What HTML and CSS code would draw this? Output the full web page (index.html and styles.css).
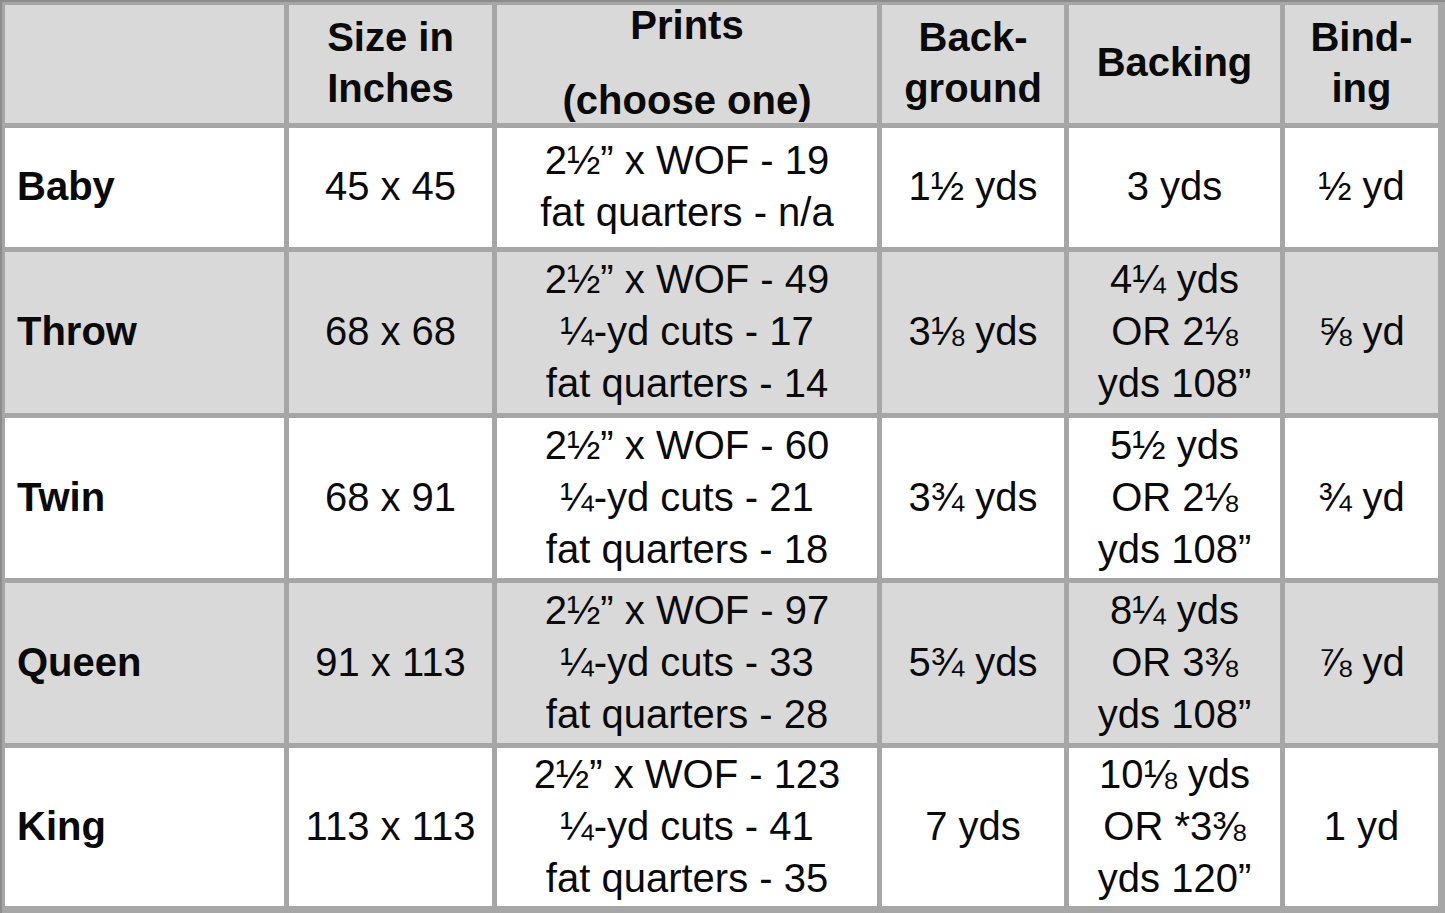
FILE: index.html
```html
<!DOCTYPE html>
<html lang="en">
<head>
<meta charset="utf-8">
<title>Quilt Fabric Requirements</title>
<link rel="stylesheet" href="styles.css">
</head>
<body>
<div class="chart">
  <div class="cell head"></div>
  <div class="cell head c"><span>Size in</span><span>Inches</span></div>
  <div class="cell head c prints"><span>Prints</span><span>(choose one)</span></div>
  <div class="cell head c"><span>Back-</span><span>ground</span></div>
  <div class="cell head c"><span>Backing</span></div>
  <div class="cell head c"><span>Bind-</span><span>ing</span></div>

  <div class="cell name"><span>Baby</span></div>
  <div class="cell c"><span>45 x 45</span></div>
  <div class="cell c"><span>2½” x WOF - 19</span><span>fat quarters - n/a</span></div>
  <div class="cell c"><span>1½ yds</span></div>
  <div class="cell c"><span>3 yds</span></div>
  <div class="cell c"><span>½ yd</span></div>

  <div class="cell shade name"><span>Throw</span></div>
  <div class="cell shade c"><span>68 x 68</span></div>
  <div class="cell shade c"><span>2½” x WOF - 49</span><span>¼-yd cuts - 17</span><span>fat quarters - 14</span></div>
  <div class="cell shade c"><span>3⅛ yds</span></div>
  <div class="cell shade c"><span>4¼ yds</span><span>OR 2⅛</span><span>yds 108”</span></div>
  <div class="cell shade c"><span>⅝ yd</span></div>

  <div class="cell name"><span>Twin</span></div>
  <div class="cell c"><span>68 x 91</span></div>
  <div class="cell c"><span>2½” x WOF - 60</span><span>¼-yd cuts - 21</span><span>fat quarters - 18</span></div>
  <div class="cell c"><span>3¾ yds</span></div>
  <div class="cell c"><span>5½ yds</span><span>OR 2⅛</span><span>yds 108”</span></div>
  <div class="cell c"><span>¾ yd</span></div>

  <div class="cell shade name"><span>Queen</span></div>
  <div class="cell shade c"><span>91 x 113</span></div>
  <div class="cell shade c"><span>2½” x WOF - 97</span><span>¼-yd cuts - 33</span><span>fat quarters - 28</span></div>
  <div class="cell shade c"><span>5¾ yds</span></div>
  <div class="cell shade c"><span>8¼ yds</span><span>OR 3⅜</span><span>yds 108”</span></div>
  <div class="cell shade c"><span>⅞ yd</span></div>

  <div class="cell name"><span>King</span></div>
  <div class="cell c"><span>113 x 113</span></div>
  <div class="cell c"><span>2½” x WOF - 123</span><span>¼-yd cuts - 41</span><span>fat quarters - 35</span></div>
  <div class="cell c"><span>7 yds</span></div>
  <div class="cell c"><span>10⅛ yds</span><span>OR *3⅜</span><span>yds 120”</span></div>
  <div class="cell c"><span>1 yd</span></div>
</div>
</body>
</html>
```
FILE: styles.css
```css
html, body {
  margin: 0;
  padding: 0;
  background: #ffffff;
}

.chart {
  box-sizing: border-box;
  width: 1445px;
  height: 913px;
  padding: 3px 7px 7px 3px;
  display: grid;
  grid-template-columns: 279px 203px 380px 182px 211px 153px;
  grid-template-rows: 118px 119px 161px 160px 160px 158px;
  gap: 5px;
  background: #a6a6a6;
  border-top: 2px solid #8c8c8c;
  border-left: 2px solid #8c8c8c;
  font-family: "Liberation Sans", Arial, sans-serif;
  font-size: 40px;
  line-height: 52px;
  color: #0a0a0a;
}

.cell {
  box-sizing: border-box;
  background: #ffffff;
  display: flex;
  flex-direction: column;
  justify-content: center;
  overflow: visible;
  white-space: nowrap;
  padding-bottom: 3px;
}

.cell.head,
.cell.shade {
  background: #d9d9d9;
}

.cell.head {
  font-weight: bold;
  line-height: 51px;
}

.cell.c {
  align-items: center;
  text-align: center;
}

.cell.name {
  font-weight: bold;
  padding-left: 12px;
}

.cell.prints {
  line-height: 40px;
  gap: 35px;
  padding-bottom: 4px;
}
```
